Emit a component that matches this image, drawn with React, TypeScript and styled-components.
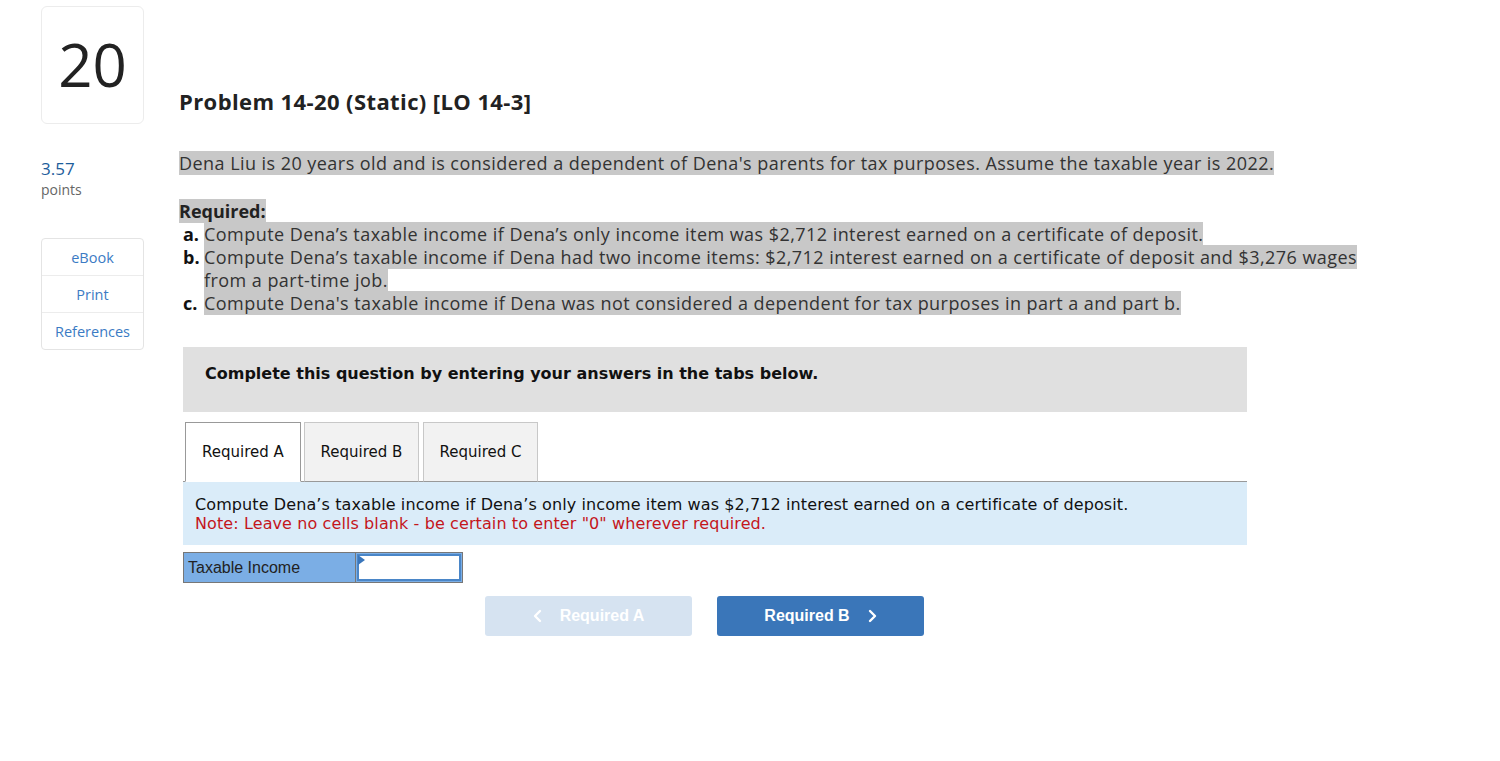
import styled, { createGlobalStyle } from 'styled-components';

const GlobalStyle = createGlobalStyle`
  html, body {
    margin: 0;
    padding: 0;
    background: #fff;
  }
  body {
    font-family: "Open Sans", Lato, sans-serif;
    color: #333;
  }
`;

const Page = styled.div`
  display: grid;
  grid-template-columns: 103px 1fr;
  column-gap: 35px;
  padding: 6px 0 0 41px;
  min-height: 755px;
`;

const Sidebar = styled.aside`
  display: flex;
  flex-direction: column;
`;

const NumberCard = styled.div`
  height: 118px;
  box-sizing: border-box;
  border: 1px solid #ececec;
  border-radius: 6px;
  display: flex;
  align-items: center;
  justify-content: center;
  font-size: 60px;
  font-weight: 400;
  color: #222;
  padding-bottom: 2px;
`;

const Points = styled.div`
  margin-top: 35px;
  font-size: 17px;
  line-height: 20px;
  color: #1d5d9b;
`;

const PointsLabel = styled.div`
  font-size: 14px;
  line-height: 22px;
  color: #666;
`;

const LinkBox = styled.div`
  margin-top: 37px;
  border: 1px solid #e4e4e4;
  border-radius: 4px;
  display: flex;
  flex-direction: column;
`;

const SideLink = styled.a`
  height: 36px;
  display: flex;
  align-items: center;
  justify-content: center;
  font-size: 14.5px;
  color: #3b7bc4;
  text-decoration: none;
  border-top: 1px solid #ececec;
  &:first-child {
    border-top: none;
  }
`;

const Main = styled.main`
  padding-top: 81px;
  display: flex;
  flex-direction: column;
`;

const Title = styled.h2`
  margin: 0;
  font-size: 22px;
  line-height: 28px;
  font-weight: 700;
  letter-spacing: 0.4px;
  color: #222;
`;

const Paragraph = styled.p`
  margin: 37px 0 0;
  font-size: 18px;
  line-height: 23px;
  letter-spacing: 0.45px;
`;

const Mark = styled.span`
  background: #c8c8c8;
`;

const Required = styled.div`
  margin-top: 25px;
  font-size: 18px;
  line-height: 23px;
  font-weight: 700;
  color: #222;
`;

const List = styled.div`
  display: grid;
  grid-template-columns: 21px 1158px;
  margin-left: 4px;
  font-size: 18px;
  line-height: 23px;
  letter-spacing: 0.45px;
`;

const ItemLabel = styled.span`
  font-weight: 700;
  letter-spacing: 0;
  color: #111;
`;

const Question = styled.div`
  margin: 32px 0 0 4px;
  width: 1064px;
  display: flex;
  flex-direction: column;
`;

const Banner = styled.div`
  height: 65px;
  box-sizing: border-box;
  padding: 17px 22px 0;
  background: #e0e0e0;
  font-family: "DejaVu Sans", Verdana, sans-serif;
  font-weight: 700;
  font-size: 16px;
  line-height: 20px;
  color: #111;
`;

const Tabs = styled.div`
  margin-top: 10px;
  padding-left: 2px;
  display: flex;
  align-items: flex-end;
  border-bottom: 1px solid #999;
`;

const Tab = styled.button<{ $active?: boolean }>`
  height: 60px;
  box-sizing: border-box;
  margin-right: ${(p) => (p.$active ? '3px' : '4px')};
  margin-bottom: -1px;
  padding: 0;
  width: ${(p) => (p.$active ? '116px' : '115px')};
  font-family: "DejaVu Sans", Verdana, sans-serif;
  font-size: 15px;
  color: #111;
  background: ${(p) => (p.$active ? '#fff' : '#f2f2f2')};
  border: 1px solid ${(p) => (p.$active ? '#999' : '#c8c8c8')};
  border-bottom: 1px solid ${(p) => (p.$active ? '#fff' : '#999')};
  cursor: pointer;
`;

const Instructions = styled.div`
  background: #daecf9;
  padding: 13px 12px 12px;
  font-family: "DejaVu Sans", Verdana, sans-serif;
  font-size: 16px;
  line-height: 19px;
  letter-spacing: 0.1px;
  color: #111;
`;

const Note = styled.div`
  color: #c4161c;
`;

const AnswerTable = styled.table`
  margin-top: 7px;
  border-collapse: collapse;
  border: 1px solid #777;
  width: 280px;
  height: 31px;
`;

const LabelCell = styled.td`
  width: 172px;
  padding: 0 0 0 4px;
  box-sizing: border-box;
  background: #7baee5;
  font-family: "Liberation Sans", Arial, sans-serif;
  font-size: 16px;
  color: #222;
  border-right: 1px solid #777;
`;

const InputCell = styled.td`
  padding: 1px;
  background: #7baee5;
  position: relative;
`;

const Input = styled.input`
  display: block;
  width: 100%;
  height: 27px;
  box-sizing: border-box;
  border: 2px solid #4a86c8;
  background: #fff;
  outline: none;
`;

const Flag = styled.span`
  position: absolute;
  top: 2px;
  left: 2px;
  width: 0;
  height: 0;
  border-top: 5px solid transparent;
  border-bottom: 5px solid transparent;
  border-left: 7px solid #3a76bb;
`;

const NavRow = styled.div`
  margin-top: 13px;
  padding-left: 302px;
  display: flex;
  gap: 25px;
`;

const NavButton = styled.button<{ $disabled?: boolean }>`
  width: 207px;
  height: 40px;
  border: none;
  border-radius: 3px;
  display: flex;
  align-items: center;
  justify-content: center;
  gap: 18px;
  font-family: "Liberation Sans", Arial, sans-serif;
  font-weight: 700;
  font-size: 16px;
  color: #fff;
  background: ${(p) => (p.$disabled ? '#d6e3f1' : '#3a76b9')};
  cursor: ${(p) => (p.$disabled ? 'default' : 'pointer')};
`;

function Chevron({ dir }: { dir: 'left' | 'right' }) {
  return (
    <svg width="9" height="14" viewBox="0 0 9 14" fill="none">
      <path
        d={dir === 'left' ? 'M7 2 L2 7 L7 12' : 'M2 2 L7 7 L2 12'}
        stroke="#fff"
        strokeWidth="2.4"
        strokeLinecap="round"
        strokeLinejoin="round"
      />
    </svg>
  );
}

export default function App() {
  return (
    <>
      <GlobalStyle />
      <Page>
        <Sidebar>
          <NumberCard>20</NumberCard>
          <Points>3.57</Points>
          <PointsLabel>points</PointsLabel>
          <LinkBox>
            <SideLink href="#">eBook</SideLink>
            <SideLink href="#">Print</SideLink>
            <SideLink href="#">References</SideLink>
          </LinkBox>
        </Sidebar>
        <Main>
          <Title>Problem 14-20 (Static) [LO 14-3]</Title>
          <Paragraph>
            <Mark>
              Dena Liu is 20 years old and is considered a dependent of Dena's parents for tax purposes. Assume the
              taxable year is 2022.
            </Mark>
          </Paragraph>
          <Required>
            <Mark>Required:</Mark>
          </Required>
          <List>
            <ItemLabel>a.</ItemLabel>
            <span>
              <Mark>
                Compute Dena’s taxable income if Dena’s only income item was $2,712 interest earned on a certificate of
                deposit.
              </Mark>
            </span>
            <ItemLabel>b.</ItemLabel>
            <span>
              <Mark>
                Compute Dena’s taxable income if Dena had two income items: $2,712 interest earned on a certificate of
                deposit and $3,276 wages from a part-time job.
              </Mark>
            </span>
            <ItemLabel>c.</ItemLabel>
            <span>
              <Mark>
                Compute Dena's taxable income if Dena was not considered a dependent for tax purposes in part a and part
                b.
              </Mark>
            </span>
          </List>
          <Question>
            <Banner>Complete this question by entering your answers in the tabs below.</Banner>
            <Tabs>
              <Tab $active>Required A</Tab>
              <Tab>Required B</Tab>
              <Tab>Required C</Tab>
            </Tabs>
            <Instructions>
              <div>
                Compute Dena’s taxable income if Dena’s only income item was $2,712 interest earned on a certificate of
                deposit.
              </div>
              <Note>Note: Leave no cells blank - be certain to enter "0" wherever required.</Note>
            </Instructions>
            <AnswerTable>
              <tbody>
                <tr>
                  <LabelCell>Taxable Income</LabelCell>
                  <InputCell>
                    <Input />
                    <Flag />
                  </InputCell>
                </tr>
              </tbody>
            </AnswerTable>
            <NavRow>
              <NavButton $disabled>
                <Chevron dir="left" />
                Required A
              </NavButton>
              <NavButton>
                Required B
                <Chevron dir="right" />
              </NavButton>
            </NavRow>
          </Question>
        </Main>
      </Page>
    </>
  );
}
